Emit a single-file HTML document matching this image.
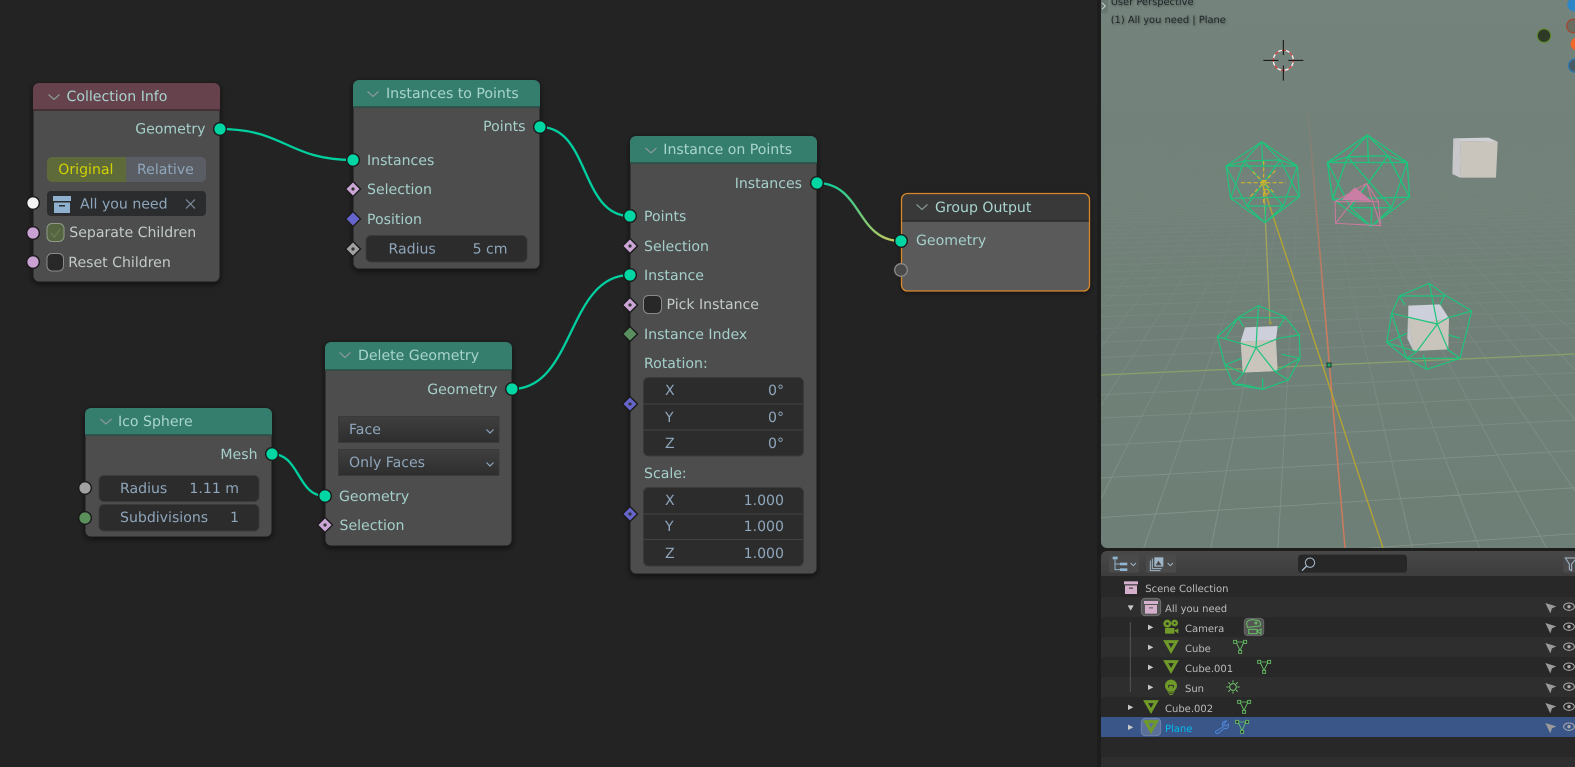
<!DOCTYPE html>
<html><head><meta charset="utf-8"><title>Geometry Nodes</title>
<style>
html,body{margin:0;padding:0;background:#232323;width:1575px;height:767px;overflow:hidden}
svg{display:block;position:absolute;left:0;top:0}
text{font-family:"DejaVu Sans","Liberation Sans",sans-serif;font-size:14.1px;text-rendering:geometricPrecision}
.h{fill:#a9d5d0}.l{fill:#a6d0cb}.f{fill:#8fa6bc}.c{fill:#c4cbcb}
.r{text-anchor:end}
.o text,text.o{font-size:10px;fill:#bcbcbc}
.v{font-size:9.9px;fill:#20262a;text-shadow:1px 1px 2px rgba(0,0,0,.35)}
.nb{fill:#4d4d4d;stroke:#1c1c1c;stroke-width:1}
.nh{fill:#357d6d}
.hl{stroke:#2a4d45;stroke-width:1.5}
.ch{fill:none;stroke:#8a9a97;stroke-width:1.2}
.fd{fill:#2c2c2c;stroke:#3a3a3a;stroke-width:1}
.w{fill:none;stroke:#1fc47c;stroke-width:3.6}
.ln{fill:none;stroke:#00cfa0;stroke-width:2.3}
.sk{stroke:#1a1a1a;stroke-width:1.4}
.g{fill:#00d6a3}
.mi{fill:none;stroke:#6f9a2a;stroke-width:9;stroke-linejoin:miter}
.md{fill:none;stroke:#66c266;stroke-width:2.6}
.ar{fill:#c8c8c8}
</style></head><body>
<svg width="1575" height="767" viewBox="0 0 1575 767" xmlns="http://www.w3.org/2000/svg">
<defs>
<filter id="s" x="-20%" y="-20%" width="140%" height="140%"><feDropShadow dx="0" dy="2" stdDeviation="3" flood-color="#000" flood-opacity=".55"/></filter>
<linearGradient id="vb" x1="0" y1="0" x2="0" y2="1"><stop offset="0" stop-color="#74837b"/><stop offset="1" stop-color="#6d7f76"/></linearGradient>
<linearGradient id="gf" gradientUnits="userSpaceOnUse" x1="0" y1="130" x2="0" y2="520"><stop offset="0" stop-color="#8f9b95" stop-opacity="0"/><stop offset=".45" stop-color="#8f9b95" stop-opacity=".22"/><stop offset="1" stop-color="#8f9b95" stop-opacity=".65"/></linearGradient>
<linearGradient id="rf" gradientUnits="userSpaceOnUse" x1="0" y1="100" x2="0" y2="300"><stop offset="0" stop-color="#c9745a" stop-opacity="0"/><stop offset="1" stop-color="#cc7a5c"/></linearGradient>
<linearGradient id="lg" gradientUnits="userSpaceOnUse" x1="817" y1="183" x2="901" y2="241"><stop offset="0" stop-color="#00cfa0"/><stop offset="1" stop-color="#cfc75a"/></linearGradient>
<linearGradient id="dd" x1="0" y1="0" x2="0" y2="1"><stop offset="0" stop-color="#3f3f3f"/><stop offset="1" stop-color="#2e2e2e"/></linearGradient>
<linearGradient id="hd" x1="0" y1="0" x2="0" y2="1"><stop offset="0" stop-color="#484848"/><stop offset="1" stop-color="#3d3d3d"/></linearGradient>
<clipPath id="vc"><path d="M1101 -10H1575V548H1107a6 6 0 0 1-6-6Z"/></clipPath>
<g id="msh"><polygon class="mi" points="-16,-15 16,-15 0,13"/></g>
<g id="dat"><path class="md" d="M-12-13H12L0 12Z"/><rect x="-19" y="-18" width="9" height="9" fill="#2b2b2b" stroke="#66c266" stroke-width="2.6"/><rect x="11" y="-18" width="9" height="9" fill="#2b2b2b" stroke="#66c266" stroke-width="2.6"/><rect x="-4" y="12" width="9" height="9" fill="#2b2b2b" stroke="#66c266" stroke-width="2.6"/></g>
<g id="cur"><polygon points="-16,-13 17,-3 4,3 -1,18" fill="#9a9a9a"/><ellipse cx="55" cy="-2" rx="16" ry="11" fill="none" stroke="#aaa" stroke-width="3"/><circle cx="55" cy="-2" r="5" fill="#aaa"/></g>
<g id="col"><rect x="0" y="0" width="42" height="9"/><path d="M3 12H39V38H3ZM15 19V22H27V19Z" fill-rule="evenodd"/></g>
</defs>

<rect width="1575" height="767" fill="#232323"/>

<!-- links -->
<path class="ln" d="M220 129C285 129 288 160 353 160"/>
<path class="ln" d="M540 127C590 127 580 216 630 216"/>
<path class="ln" d="M512 389C575 389 567 275 630 275"/>
<path class="ln" d="M272 454C300 454 297 496 325 496"/>
<path class="ln" style="stroke:url(#lg)" d="M817 183C862 183 856 241 901 241"/>

<!-- Collection Info -->
<g filter="url(#s)"><rect class="nb" x="33" y="83" width="187" height="199" rx="6"/></g>
<path d="M33 110V89a6 6 0 0 1 6-6H214a6 6 0 0 1 6 6V110Z" fill="#66424d"/>
<path d="M33 110H220" stroke="#3f2a30" stroke-width="1.5"/>
<path class="ch" d="M48.5 94.5L54 99.5L59.500 94.5"/>
<text class="h" x="66.500" y="101">Collection Info</text>
<text class="l r" x="205.500" y="133.500">Geometry</text>
<path d="M47 162a5 5 0 0 1 5-5H126V182H52a5 5 0 0 1-5-5Z" fill="#5f6a3b"/>
<path d="M126 157H201a5 5 0 0 1 5 5V177a5 5 0 0 1-5 5H126Z" fill="#5a5e64"/>
<text x="58.300" y="174" fill="#d2d200">Original</text>
<text class="f" x="137" y="174">Relative</text>
<rect x="47" y="191" width="159" height="25" rx="4" fill="#2a2c2d"/>
<g fill="#8fb0cf"><rect x="53" y="196" width="18" height="5"/><path d="M54 202.500H70V213H54ZM59 205V206.500H65V205Z" fill-rule="evenodd"/></g>
<text class="f" x="80" y="208.500">All you need</text>
<path d="M186 199.500L195 208.500M195 199.500L186 208.500" stroke="#7f8ea0" stroke-width="1.200"/>
<rect x="47" y="223.500" width="17" height="18" rx="5" fill="#556541" stroke="#8f9a88"/>
<path d="M51 233L54.500 237L60 229" fill="none" stroke="#667a50" stroke-width="1.500"/>
<text class="c" x="69.300" y="237">Separate Children</text>
<rect x="47" y="253.500" width="16.500" height="17.500" rx="5" fill="#282828" stroke="#8a8a8a"/>
<text class="c" x="68.300" y="267">Reset Children</text>
<circle class="sk" cx="33" cy="203" r="6.300" fill="#f4f4f4"/>
<circle class="sk" cx="33" cy="233" r="6.300" fill="#c9a1d3"/>
<circle class="sk" cx="33" cy="262" r="6.300" fill="#c9a1d3"/>
<circle class="sk g" cx="220" cy="129" r="6.300"/>

<!-- Instances to Points -->
<g filter="url(#s)"><rect class="nb" x="353" y="80" width="187" height="189" rx="6"/></g>
<path class="nh" d="M353 107V86a6 6 0 0 1 6-6H534a6 6 0 0 1 6 6V107Z"/>
<path class="hl" d="M353 107H540"/>
<path class="ch" d="M367.500 91.500L373 96.500L378.500 91.500"/>
<text class="h" x="386" y="98">Instances to Points</text>
<text class="l r" x="525.500" y="131">Points</text>
<text class="l" x="367" y="165">Instances</text>
<text class="l" x="367" y="194">Selection</text>
<text class="l" x="367" y="224">Position</text>
<rect class="fd" x="366" y="235.500" width="161" height="26.500" rx="5"/>
<text class="f" x="388.500" y="253.500">Radius</text>
<text class="f r" x="507.500" y="253.500">5 cm</text>
<circle class="sk g" cx="540" cy="127" r="6.300"/>
<circle class="sk g" cx="353" cy="160" r="6.300"/>
<g class="sk"><path d="M353 181.500L360.500 189L353 196.500L345.500 189Z" fill="#cda6d8"/><circle cx="353" cy="189" r="1.600" fill="#333" stroke="none"/>
<path d="M353 211.500L360.500 219L353 226.500L345.500 219Z" fill="#6565cc"/>
<path d="M353 241.500L360.500 249L353 256.500L345.500 249Z" fill="#a1a1a1"/><circle cx="353" cy="249" r="1.600" fill="#333" stroke="none"/></g>

<!-- Instance on Points -->
<g filter="url(#s)"><rect class="nb" x="630" y="136" width="187" height="438" rx="6"/></g>
<path class="nh" d="M630 163V142a6 6 0 0 1 6-6H811a6 6 0 0 1 6 6V163Z"/>
<path class="hl" d="M630 163H817"/>
<path class="ch" d="M645.500 148L651 153L656.500 148"/>
<text class="h" x="663.300" y="154">Instance on Points</text>
<text class="l r" x="802" y="188">Instances</text>
<text class="l" x="644" y="221">Points</text>
<text class="l" x="644" y="251">Selection</text>
<text class="l" x="644" y="280">Instance</text>
<rect x="643.500" y="295.500" width="18" height="18" rx="5" fill="#282828" stroke="#8a8a8a"/>
<text class="c" x="666.500" y="309">Pick Instance</text>
<text class="l" x="644" y="339">Instance Index</text>
<text class="l" x="644" y="368">Rotation:</text>
<rect class="fd" x="643.500" y="377.500" width="160" height="78.500" rx="5"/>
<path d="M644 404H803M644 430H803M644 514H803M644 539.500H803" stroke="#434343"/>
<text class="f" x="665" y="395">X</text><text class="f r" x="784" y="395">0°</text>
<text class="f" x="665" y="422">Y</text><text class="f r" x="784" y="422">0°</text>
<text class="f" x="665" y="448">Z</text><text class="f r" x="784" y="448">0°</text>
<text class="l" x="644" y="478">Scale:</text>
<rect class="fd" x="643.500" y="487.500" width="160" height="78.500" rx="5"/>
<path d="M644 514H803M644 539.500H803" stroke="#434343"/>
<text class="f" x="665" y="505">X</text><text class="f r" x="784" y="505">1.000</text>
<text class="f" x="665" y="531">Y</text><text class="f r" x="784" y="531">1.000</text>
<text class="f" x="665" y="558">Z</text><text class="f r" x="784" y="558">1.000</text>
<circle class="sk g" cx="817" cy="183" r="6.300"/>
<circle class="sk g" cx="630" cy="216" r="6.300"/>
<circle class="sk g" cx="630" cy="275" r="6.300"/>
<g class="sk"><path d="M630 238.500L637.500 246L630 253.500L622.500 246Z" fill="#cda6d8"/><circle cx="630" cy="246" r="1.600" fill="#333" stroke="none"/>
<path d="M630 297.500L637.500 305L630 312.500L622.500 305Z" fill="#cda6d8"/><circle cx="630" cy="305" r="1.600" fill="#333" stroke="none"/>
<path d="M630 326.500L637.500 334L630 341.500L622.500 334Z" fill="#5a8f5f"/>
<path d="M630 396.500L637.500 404L630 411.500L622.500 404Z" fill="#6565cc"/><circle cx="630" cy="404" r="1.600" fill="#333" stroke="none"/>
<path d="M630 506.500L637.500 514L630 521.500L622.500 514Z" fill="#6565cc"/><circle cx="630" cy="514" r="1.600" fill="#333" stroke="none"/></g>

<!-- Group Output -->
<g filter="url(#s)"><rect x="901.500" y="193.500" width="188" height="97.500" rx="6" fill="#5a5a5a"/></g>
<path d="M901.500 221V199.500a6 6 0 0 1 6-6H1083.500a6 6 0 0 1 6 6V221Z" fill="#393939"/>
<path d="M902 221H1089" stroke="#2a2a2a" stroke-width="1.500"/>
<rect x="901.500" y="193.500" width="188" height="97.500" rx="6" fill="none" stroke="#d9882c" stroke-width="1.300"/>
<path class="ch" d="M916.500 204.500L922 209.500L927.500 204.500"/>
<text class="h" x="935" y="212">Group Output</text>
<text class="l" x="916" y="245">Geometry</text>
<circle class="sk g" cx="901" cy="241" r="6.300"/>
<circle cx="901" cy="270" r="6.300" fill="#4a4a4a" stroke="#8a8a8a" stroke-width="1.300"/>

<!-- Ico Sphere -->
<g filter="url(#s)"><rect class="nb" x="85" y="408" width="187" height="129" rx="6"/></g>
<path class="nh" d="M85 435V414a6 6 0 0 1 6-6H266a6 6 0 0 1 6 6V435Z"/>
<path class="hl" d="M85 435H272"/>
<path class="ch" d="M100.500 419L106 424L111.500 419"/>
<text class="h" x="118" y="426">Ico Sphere</text>
<text class="l r" x="257.500" y="459">Mesh</text>
<rect class="fd" x="99" y="475.500" width="160" height="26" rx="5"/>
<rect class="fd" x="99" y="504.500" width="160" height="26.500" rx="5"/>
<text class="f" x="120" y="493">Radius</text><text class="f r" x="239" y="493">1.11 m</text>
<text class="f" x="120" y="522">Subdivisions</text><text class="f r" x="239" y="522">1</text>
<circle class="sk g" cx="272" cy="454" r="6.300"/>
<circle class="sk" cx="85" cy="488" r="6.300" fill="#a1a1a1"/>
<circle class="sk" cx="85" cy="518" r="6.300" fill="#5b8f5b"/>

<!-- Delete Geometry -->
<g filter="url(#s)"><rect class="nb" x="325" y="342" width="187" height="204" rx="6"/></g>
<path class="nh" d="M325 370V348a6 6 0 0 1 6-6H506a6 6 0 0 1 6 6V370Z"/>
<path class="hl" d="M325 370H512"/>
<path class="ch" d="M339.500 352.500L345 357.500L350.500 352.500"/>
<text class="h" x="358" y="360">Delete Geometry</text>
<text class="l r" x="497.500" y="394">Geometry</text>
<rect x="338.500" y="416.500" width="160.500" height="26" fill="url(#dd)" stroke="#3a3a3a"/>
<rect x="338.500" y="449.500" width="160.500" height="26" fill="url(#dd)" stroke="#3a3a3a"/>
<text class="f" x="349" y="434">Face</text>
<text class="f" x="349" y="467">Only Faces</text>
<path d="M486.500 429.500L490 433L493.500 429.500M486.500 462.500L490 466L493.500 462.500" fill="none" stroke="#8fa6bc" stroke-width="1.200"/>
<text class="l" x="339" y="501">Geometry</text>
<text class="l" x="339.500" y="530">Selection</text>
<circle class="sk g" cx="512" cy="389" r="6.300"/>
<circle class="sk g" cx="325" cy="496" r="6.300"/>
<g class="sk"><path d="M325 517.500L332.500 525L325 532.500L317.500 525Z" fill="#cda6d8"/><circle cx="325" cy="525" r="1.600" fill="#333" stroke="none"/></g>

<!-- right panels background -->
<rect x="1097" y="0" width="478" height="767" fill="#1d1d1d"/>

<!-- viewport -->
<g clip-path="url(#vc)">
<rect x="1101" y="-10" width="474" height="558" fill="url(#vb)"/>
<g id="grid" fill="none" stroke="url(#gf)" stroke-width=".9"></g>
<path d="M1101 375L1575 354" stroke="#8a9f6a" stroke-width="1.300"/>
<path d="M1307 100L1345 548" stroke="url(#rf)" stroke-width="1.500" fill="none"/>
<path d="M1263 186L1383 548" stroke="#b8a530" stroke-width="1.300"/>
<path d="M1264 190L1270 322" stroke="#a8a85a" stroke-width="1.200"/>
<rect x="1327" y="363" width="4" height="4" fill="#1fae6c" stroke="#1c3a2c"/>

<g transform="translate(1090 0) scale(.33333)">
  <!-- top cube -->
  <polygon points="1090,415 1195,413 1223,425 1113,423" fill="#cfd0d5"/>
  <polygon points="1090,415 1113,423 1110,533 1087,522" fill="#c8c8cc"/>
  <polygon points="1113,423 1223,425 1218,533 1110,533" fill="#c9c5bd"/>
  <!-- sphere A -->
  <path id="ico" class="w" d="M515 425L622 498L628 590L525 668L422 595L408 498ZM515 425L462 483L408 498M515 425L570 480L622 498M515 425L518 500M462 483L570 480M408 498L622 498M462 483L422 595M570 480L628 590M408 498L470 618M622 498L580 618M422 595L628 590M470 618L580 618M525 668L470 618M525 668L580 618M525 668L527 620M462 483L580 618M570 480L470 618"/>
  <!-- sphere B -->
  <path class="w" transform="translate(832 405) scale(1.120 1.130) translate(-515 -425)" d="M515 425L622 498L628 590L525 668L422 595L408 498ZM515 425L462 483L408 498M515 425L570 480L622 498M515 425L518 500M462 483L570 480M408 498L622 498M462 483L422 595M570 480L628 590M408 498L470 618M622 498L580 618M422 595L628 590M470 618L580 618M525 668L470 618M525 668L580 618M525 668L527 620M462 483L580 618M570 480L470 618"/>
  <!-- sun -->
  <g fill="none" stroke="#d0b32c" stroke-width="3.6">
    <circle cx="521" cy="548" r="7"/>
    <path stroke-dasharray="12 7" d="M453 548H588M521 483V615M488 515L556 582M556 512L476 595"/>
    <circle cx="530" cy="575" r="7"/>
  </g>
  <!-- camera -->
  <polygon points="755,600 795,562 845,603" fill="#c97fa5"/>
  <path fill="none" stroke="#cf7a9e" stroke-width="3" d="M735 605H865L872 677L737 670ZM735 605L830 550M865 605L830 550M872 677L830 550M737 670L830 550"/>
  <!-- 3D cursor -->
  <circle cx="580" cy="181" r="30" fill="none" stroke="#f2f2f2" stroke-width="4"/>
  <circle cx="580" cy="181" r="30" fill="none" stroke="#d03a3a" stroke-width="4" stroke-dasharray="11.780 11.780" stroke-dashoffset="5"/>
  <path d="M520 181H565M595 181H640M580 120V165M580 197V242" stroke="#111" stroke-width="3"/>
  <!-- gizmo -->
  <circle cx="1362" cy="107" r="20" fill="#2f3a26" stroke="#5c8a2a" stroke-width="3"/>
  <circle cx="1450" cy="78" r="20" fill="#6a6d60" stroke="#a04a34" stroke-width="4"/>
  <circle cx="1462" cy="132" r="20" fill="#f0682a"/>
  <circle cx="1456" cy="197" r="20" fill="#4b5a63" stroke="#2a78b0" stroke-width="4"/>
  <circle cx="1452" cy="14" r="20" fill="#2f86c6"/>
  <!-- arrow button -->
  <rect x="28" y="-10" width="26" height="50" rx="8" fill="#687771"/>
  <path d="M36 8L46 18L36 28" fill="none" stroke="#c8cfcc" stroke-width="3"/>
</g>

<!-- sphere C -->
<g transform="translate(1210 295) scale(.33333)">
  <polygon points="105,97 203,93 198,135 92,140" fill="#cdd0da"/>
  <polygon points="92,140 198,135 203,228 98,233" fill="#c9c5bd"/>
  <path class="w" d="M145 32L225 65L268 120L270 190L235 255L158 283L70 268L45 210L22 125L85 68ZM85 68H225M138 158L145 32M22 125L138 158L205 130M138 158L100 235M138 158L195 230M68 268L100 235M235 255L195 230M45 210L95 190M270 190L215 178M158 283V250M70 268H100L158 283M45 210L70 268M22 125L45 210M85 68L100 95M225 68L205 100M268 120L205 130M85 68L45 130M100 235L45 210M195 230L270 190"/>
  <circle cx="181" cy="84" r="3" fill="none" stroke="#b8a530" stroke-width="2"/>
</g>
<!-- sphere D -->
<g transform="translate(1380 270) scale(.33333)">
  <polygon points="85,107 180,103 207,145 150,155 85,145" fill="#cdd0da"/>
  <polygon points="85,107 85,145 100,243 82,205" fill="#c8c8cc"/>
  <polygon points="85,145 150,155 207,145 205,238 100,243" fill="#c9c5bd"/>
  <path class="w" d="M148 40L195 75L275 123L240 265L140 298L80 265L20 218L35 130L58 78ZM148 40L172 162M58 78H195M35 130L172 162M172 162L205 143L275 123M172 162L110 245M172 162L205 240M20 218L80 190M275 123L240 265M205 240L240 265M110 245L80 265M80 265H240M140 298L130 255M58 78L75 105M195 75L180 105M240 205L205 195M20 218L110 245M35 130L80 265"/>
</g>
<text class="v" x="1110.700" y="5">User Perspective</text>
<text class="v" x="1110.700" y="23">(1) All you need | Plane</text>
</g>

<!-- outliner -->
<path d="M1101 576V557a6 6 0 0 1 6-6H1575V576Z" fill="url(#hd)"/>
<rect x="1101" y="576" width="474" height="21" fill="#282828"/>
<rect x="1101" y="597" width="474" height="20" fill="#2e2e2e"/>
<rect x="1101" y="617" width="474" height="20" fill="#282828"/>
<rect x="1101" y="637" width="474" height="20" fill="#2e2e2e"/>
<rect x="1101" y="657" width="474" height="20" fill="#282828"/>
<rect x="1101" y="677" width="474" height="20" fill="#2e2e2e"/>
<rect x="1101" y="697" width="474" height="20" fill="#282828"/>
<rect x="1101" y="717" width="474" height="20" fill="#3a5688"/>
<rect x="1101" y="737" width="474" height="20" fill="#282828"/>
<rect x="1101" y="757" width="474" height="10" fill="#2e2e2e"/>

<g class="o">
<text x="1145.300" y="592">Scene Collection</text>
<text x="1165" y="612">All you need</text>
<text x="1185" y="632">Camera</text>
<text x="1185" y="652">Cube</text>
<text x="1185" y="672">Cube.001</text>
<text x="1185" y="692">Sun</text>
<text x="1165" y="712">Cube.002</text>
<text x="1165" y="732" style="fill:#00bdf0">Plane</text>
</g>

<g transform="translate(1090 540) scale(.33333)">
  <!-- header buttons -->
  <rect x="57" y="44" width="90" height="54" rx="6" fill="#4a4a4a"/>
  <rect x="168" y="44" width="90" height="54" rx="6" fill="#4a4a4a"/>
  <rect x="624" y="44" width="327" height="54" rx="10" fill="#272727"/>
  <rect x="1420" y="44" width="40" height="54" rx="6" fill="#4a4a4a"/>
  <g fill="#8fb5d0"><rect x="68" y="50" width="15" height="8"/><rect x="90" y="68" width="22" height="8"/><rect x="90" y="85" width="22" height="8"/></g>
  <path d="M75 58V89H90M75 72H90" fill="none" stroke="#8fb5d0" stroke-width="3"/>
  <path d="M122 69L130 77L138 69M233 69L241 77L249 69" fill="none" stroke="#9fb6c8" stroke-width="3"/>
  <path d="M181 62V92H211M187 56V86H215" fill="none" stroke="#9fb6c8" stroke-width="3"/>
  <rect x="193" y="52" width="27" height="28" fill="#9fb6c8"/>
  <path d="M197 76L205 62L215 76Z" fill="#4a4a4a"/>
  <circle cx="660" cy="68" r="14" fill="none" stroke="#a8bdd0" stroke-width="3"/>
  <path d="M650 78L636 92" stroke="#a8bdd0" stroke-width="4"/>
  <path d="M1426 54H1460L1445 72V92L1438 88V72Z" fill="none" stroke="#a8bdd0" stroke-width="3"/>

  <!-- highlights -->
  <rect x="154" y="175" width="58" height="52" rx="12" fill="#555" stroke="#6e6e6e" stroke-width="3"/>
  <rect x="463" y="235" width="58" height="52" rx="10" fill="#555" stroke="#666" stroke-width="3"/>
  <rect x="154" y="535" width="58" height="52" rx="12" fill="#5b7199" stroke="#6f83a8" stroke-width="3"/>

  <!-- collection icons -->
  <use href="#col" transform="translate(102 124)" fill="#d4b0cc"/>
  <use href="#col" transform="translate(162 183)" fill="#d4b0cc"/>

  <!-- tree -->
  <path d="M121 247V456" stroke="#555" stroke-width="3"/>
  <polygon class="ar" points="113,196 131,196 122,212"/>
  <polygon class="ar" points="174,254 190,262 174,270"/>
  <polygon class="ar" points="174,314 190,322 174,330"/>
  <polygon class="ar" points="174,374 190,382 174,390"/>
  <polygon class="ar" points="174,434 190,442 174,450"/>
  <polygon class="ar" points="114,494 130,502 114,510"/>
  <polygon class="ar" points="114,554 130,562 114,570"/>

  <!-- camera icon -->
  <g fill="#6f9a2a"><circle cx="232" cy="251" r="12"/><circle cx="254" cy="249" r="10"/><rect x="225" y="264" width="28" height="17"/><polygon points="252,272 265,265 265,281"/></g>
  <circle cx="232" cy="251" r="4" fill="#282828"/><circle cx="254" cy="249" r="3" fill="#282828"/>
  <use href="#msh" transform="translate(243 320)"/>
  <use href="#msh" transform="translate(243 380)"/>
  <use href="#msh" transform="translate(183 500)"/>
  <use href="#msh" transform="translate(183 560)"/>
  <!-- bulb -->
  <g fill="#6f9a2a"><circle cx="243" cy="437" r="18"/><rect x="232" y="450" width="22" height="5"/><rect x="234" y="457" width="18" height="3"/><rect x="238" y="462" width="10" height="3"/></g>
  <path d="M236 443V436H250V443" fill="none" stroke="#2b2b2b" stroke-width="3"/>

  <!-- data icons -->
  <g fill="none" stroke="#66c266" stroke-width="3"><path d="M470 250C470 240 485 238 495 240C510 240 514 250 510 258L472 262Z"/><circle cx="498" cy="249" r="3"/><rect x="476" y="268" width="25" height="13"/><path d="M501 274L513 267V282Z"/></g>
  <use href="#dat" transform="translate(450 319)"/>
  <use href="#dat" transform="translate(522 379)"/>
  <use href="#dat" transform="translate(462 499)"/>
  <use href="#dat" transform="translate(456 559)"/>
  <g fill="none" stroke="#72c46e" stroke-width="3"><circle cx="429" cy="441" r="10"/><path d="M429 421V428M429 454V461M409 441H416M442 441H449M415 427L420 432M438 450L443 455M443 427L438 432M420 450L415 455"/></g>
  <path d="M410 543C402 542 396 548 397 556L401 560L378 573C374 577 379 583 385 580L403 565C412 569 417 561 415 552L407 558L401 553Z" fill="none" stroke="#4d86d6" stroke-width="3"/>

  <!-- restrict icons -->
  <use href="#cur" transform="translate(1382 202)"/>
  <use href="#cur" transform="translate(1382 262)"/>
  <use href="#cur" transform="translate(1382 322)"/>
  <use href="#cur" transform="translate(1382 382)"/>
  <use href="#cur" transform="translate(1382 442)"/>
  <use href="#cur" transform="translate(1382 502)"/>
  <use href="#cur" transform="translate(1382 562)"/>
</g>
</svg>
<script>
(function(){
var g=document.getElementById('grid'),d='';
var vx=1304,vy=90,k,n,x,y;
for(k=-40;k<=40;k++){
  x=1345+67*k;
  d+='M'+vx+' '+vy+'L'+(vx+(x-vx)*1.2)+' '+(vy+457*1.2);
}
var wx=8700,wy=40;
for(n=-40;n<=8;n++){
  var q=0.003745-0.000261*n;
  y=108+1/q;
  var sx=1096,ex=1580,m=(wy-y)/(wx-sx);
  d+='M'+sx+' '+y+'L'+ex+' '+(y+m*(ex-sx));
}
var p=document.createElementNS('http://www.w3.org/2000/svg','path');
p.setAttribute('d',d);
g.appendChild(p);
})();
</script>
</body></html>
